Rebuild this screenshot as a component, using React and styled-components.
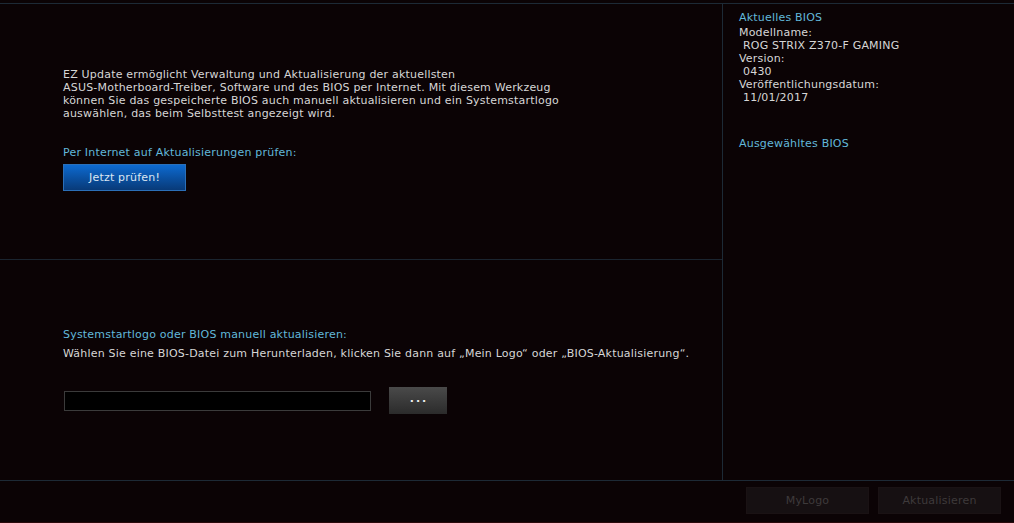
import React from 'react';
import styled, { createGlobalStyle } from 'styled-components';

const GlobalStyle = createGlobalStyle`
  html, body {
    margin: 0;
    padding: 0;
    background: #0b0305;
  }
  body {
    font-family: "DejaVu Sans", Verdana, sans-serif;
    font-size: 11px;
    letter-spacing: 0.2px;
    color: #d6d6d6;
  }
`;

const Window = styled.div`
  width: 1014px;
  height: 523px;
  box-sizing: border-box;
  padding-top: 3px;
  display: flex;
  flex-direction: column;
  border-bottom: 1px solid #2a0a0c;
`;

const Main = styled.div`
  display: flex;
  height: 476px;
  border-top: 1px solid #1d2a36;
  border-bottom: 1px solid #1d2a36;
`;

const LeftColumn = styled.div`
  width: 722px;
  display: flex;
  flex-direction: column;
  border-right: 1px solid #1d2a36;
`;

const Section = styled.section`
  height: ${(p) => p.$height}px;
  box-sizing: border-box;
  padding: ${(p) => p.$top}px 0 0 63px;
  border-bottom: ${(p) => (p.$divider ? '1px solid #1b2530' : 'none')};
`;

const Paragraph = styled.p`
  margin: 0;
  line-height: 13px;
`;

const Label = styled.div`
  color: #62b8da;
  line-height: 13px;
  margin-top: ${(p) => p.$mt || 0}px;
`;

const Hint = styled.div`
  line-height: 13px;
  margin-top: 6px;
`;

const BlueButton = styled.button`
  display: block;
  margin-top: 5px;
  width: 123px;
  height: 27px;
  border: 1px solid #2b6fb8;
  background: linear-gradient(#0d6ad0, #0a4f9f 55%, #083a78);
  color: #dbe7f3;
  font-family: inherit;
  font-size: 11px;
  letter-spacing: inherit;
  padding: 0;
  cursor: pointer;
`;

const FileRow = styled.div`
  display: flex;
  align-items: center;
  gap: 18px;
  margin-top: 27px;
  padding-left: 1px;
`;

const FileField = styled.div`
  width: 305px;
  height: 18px;
  border: 1px solid #3b3b3b;
  background: #000;
`;

const BrowseButton = styled.button`
  width: 58px;
  height: 27px;
  border: none;
  background: linear-gradient(#4a4a4a, #2b2b2b);
  color: #eee;
  font-family: inherit;
  font-size: 11px;
  font-weight: bold;
  letter-spacing: 2px;
  padding: 0 0 4px 2px;
  cursor: pointer;
`;

const RightColumn = styled.aside`
  flex: 1;
  padding: 7px 0 0 16px;
`;

const InfoList = styled.div`
  margin-top: 2px;
`;

const InfoLine = styled.div`
  line-height: 13px;
  padding-left: ${(p) => (p.$value ? 4 : 0)}px;
`;

const Footer = styled.div`
  flex: 1;
  display: flex;
  justify-content: flex-end;
  align-items: center;
  gap: 9px;
  padding: 0 13px 2px 0;
`;

const GhostButton = styled.button`
  width: 123px;
  height: 27px;
  border: 1px solid #1a1214;
  background: #161012;
  color: #3e3a3b;
  font-family: inherit;
  font-size: 11px;
  letter-spacing: inherit;
  padding: 0;
`;

const biosInfo = [
  { label: 'Modellname:', value: 'ROG STRIX Z370-F GAMING' },
  { label: 'Version:', value: '0430' },
  { label: 'Veröffentlichungsdatum:', value: '11/01/2017' },
];

export default function App() {
  return (
    <>
      <GlobalStyle />
      <Window>
        <Main>
          <LeftColumn>
            <Section $height={256} $top={64} $divider>
              <Paragraph>
                EZ Update ermöglicht Verwaltung und Aktualisierung der aktuellsten
                <br />
                ASUS-Motherboard-Treiber, Software und des BIOS per Internet. Mit diesem Werkzeug
                <br />
                können Sie das gespeicherte BIOS auch manuell aktualisieren und ein Systemstartlogo
                <br />
                auswählen, das beim Selbsttest angezeigt wird.
              </Paragraph>
              <Label $mt={26}>Per Internet auf Aktualisierungen prüfen:</Label>
              <BlueButton>Jetzt prüfen!</BlueButton>
            </Section>
            <Section $height={219} $top={68}>
              <Label>Systemstartlogo oder BIOS manuell aktualisieren:</Label>
              <Hint>
                Wählen Sie eine BIOS-Datei zum Herunterladen, klicken Sie dann auf „Mein Logo“ oder „BIOS-Aktualisierung“.
              </Hint>
              <FileRow>
                <FileField />
                <BrowseButton>...</BrowseButton>
              </FileRow>
            </Section>
          </LeftColumn>
          <RightColumn>
            <Label>Aktuelles BIOS</Label>
            <InfoList>
              {biosInfo.map((item) => (
                <React.Fragment key={item.label}>
                  <InfoLine>{item.label}</InfoLine>
                  <InfoLine $value>{item.value}</InfoLine>
                </React.Fragment>
              ))}
            </InfoList>
            <Label $mt={33}>Ausgewähltes BIOS</Label>
          </RightColumn>
        </Main>
        <Footer>
          <GhostButton>MyLogo</GhostButton>
          <GhostButton>Aktualisieren</GhostButton>
        </Footer>
      </Window>
    </>
  );
}
